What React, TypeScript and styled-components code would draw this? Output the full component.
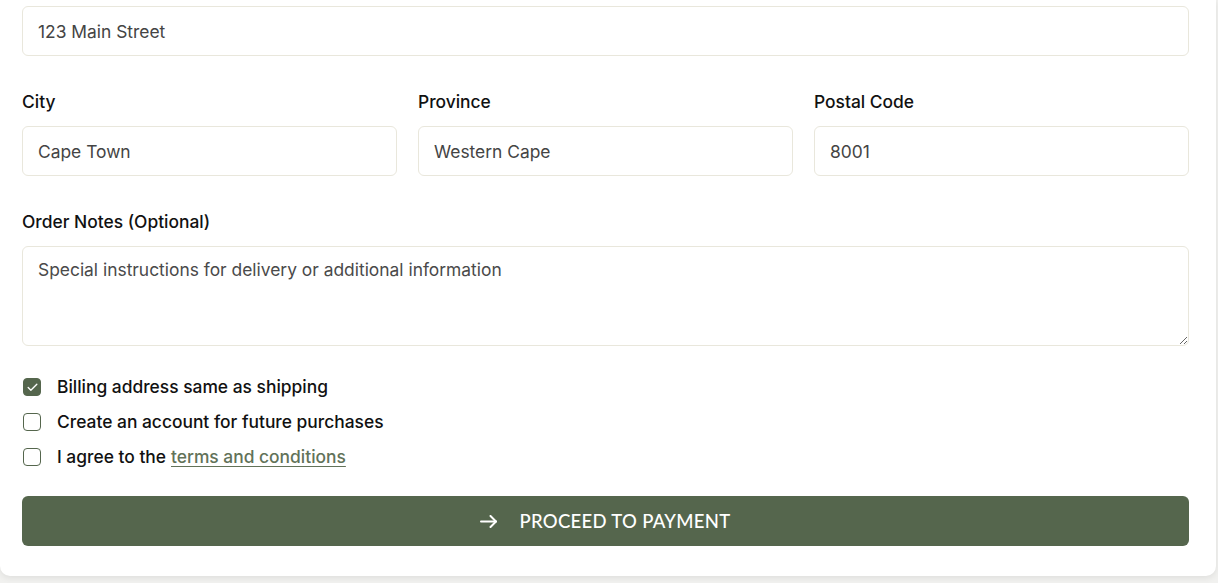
import React from "react";
import styled, { createGlobalStyle } from "styled-components";

const Global = createGlobalStyle`
  html, body { margin: 0; padding: 0; background: #f1f1ef; }
  body { font-family: Inter, "Noto Sans", sans-serif; color: #111; }
  * { box-sizing: border-box; }
`;

const Page = styled.div`
  width: 1218px;
  height: 583px;
  overflow: hidden;
`;

const Card = styled.div`
  width: 1216px;
  background: #fff;
  border-radius: 0 0 10px 10px;
  box-shadow: 0 2px 6px rgba(0, 0, 0, 0.08);
  padding: 6px 27px 30px 22px;
  display: flex;
  flex-direction: column;
`;

const Input = styled.input`
  width: 100%;
  height: 50px;
  border: 1px solid #e9e7dc;
  border-radius: 6px;
  padding: 0 15px;
  font-family: Inter, sans-serif;
  font-size: 17.4px;
  color: #444;
  background: #fff;
  outline: none;
`;

const Row = styled.div<{ $top: number }>`
  display: grid;
  grid-template-columns: repeat(3, 1fr);
  column-gap: 21px;
  margin-top: ${(p) => p.$top}px;
`;

const Field = styled.div<{ $top?: number }>`
  display: flex;
  flex-direction: column;
  gap: 12px;
  margin-top: ${(p) => p.$top ?? 0}px;
`;

const Label = styled.label`
  font-size: 17.4px;
  line-height: 24px;
  font-weight: 500;
  color: #111;
`;

const TextArea = styled.textarea`
  width: 100%;
  height: 100px;
  border: 1px solid #e9e7dc;
  border-radius: 6px;
  padding: 12px 15px;
  font-family: Inter, sans-serif;
  font-size: 17.4px;
  line-height: 22px;
  color: #444;
  resize: vertical;
  outline: none;
  display: block;
  &::placeholder {
    color: #4a4a4a;
    opacity: 1;
  }
`;

const Checks = styled.div`
  display: flex;
  flex-direction: column;
  gap: 11px;
  margin-top: 29px;
`;

const CheckRow = styled.label`
  display: flex;
  align-items: center;
  gap: 16px;
  font-size: 17.4px;
  line-height: 24px;
  font-weight: 500;
  color: #111;
  padding-left: 1px;
`;

const Box = styled.span<{ $checked?: boolean }>`
  width: 18px;
  height: 18px;
  border-radius: 4px;
  border: 1px solid #55664d;
  background: ${(p) => (p.$checked ? "#55664d" : "#fff")};
  display: flex;
  align-items: center;
  justify-content: center;
  flex-shrink: 0;
`;

const Link = styled.a`
  color: #627259;
  font-weight: 500;
  text-decoration: underline;
  text-decoration-thickness: 1px;
  text-underline-offset: 3px;
  margin-left: 5px;
`;

const Button = styled.button`
  margin-top: 27px;
  height: 50px;
  width: 100%;
  border: none;
  border-radius: 6px;
  background: #55664d;
  color: #fff;
  display: flex;
  align-items: center;
  justify-content: center;
  gap: 22px;
  font-family: Lato, Inter, sans-serif;
  font-size: 18.5px;
  font-weight: 500;
  letter-spacing: 0.3px;
  text-transform: uppercase;
  cursor: pointer;
  padding: 0;
`;

const Check = () => (
  <svg width="13" height="13" viewBox="0 0 24 24" fill="none" stroke="#fff" strokeWidth="2.5" strokeLinecap="round" strokeLinejoin="round">
    <path d="M20 6 9 17l-5-5" />
  </svg>
);

const Arrow = () => (
  <svg width="17" height="13" viewBox="0 0 17 13" fill="none" stroke="#fff" strokeWidth="2" strokeLinecap="round" strokeLinejoin="round">
    <path d="M1 6.5h15" />
    <path d="M10.5 1l5.5 5.5-5.5 5.5" />
  </svg>
);

export default function App() {
  return (
    <Page>
      <Global />
      <Card>
        <Input defaultValue="123 Main Street" />
        <Row $top={34}>
          <Field>
            <Label>City</Label>
            <Input defaultValue="Cape Town" />
          </Field>
          <Field>
            <Label>Province</Label>
            <Input defaultValue="Western Cape" />
          </Field>
          <Field>
            <Label>Postal Code</Label>
            <Input defaultValue="8001" />
          </Field>
        </Row>
        <Field $top={34}>
          <Label>Order Notes (Optional)</Label>
          <TextArea placeholder="Special instructions for delivery or additional information" />
        </Field>
        <Checks>
          <CheckRow>
            <Box $checked>
              <Check />
            </Box>
            Billing address same as shipping
          </CheckRow>
          <CheckRow>
            <Box />
            Create an account for future purchases
          </CheckRow>
          <CheckRow>
            <Box />
            <span>
              I agree to the<Link href="#">terms and conditions</Link>
            </span>
          </CheckRow>
        </Checks>
        <Button>
          <Arrow />
          Proceed to Payment
        </Button>
      </Card>
    </Page>
  );
}
